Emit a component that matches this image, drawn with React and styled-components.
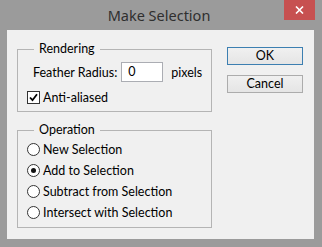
import React from 'react'
import styled, { createGlobalStyle } from 'styled-components'

const frame = '#9b9b9b'
const face = '#f0f0f0'
const groupLine = '#b4b4b4'

const GlobalStyle = createGlobalStyle`
    html, body{
        margin: 0;
        padding: 0;
        background: ${frame};
    }
    body{
        font-family: Lato, "Noto Sans", sans-serif;
        font-size: 12.5px;
        color: #000;
        white-space: nowrap;
    }
`;

const Window = styled.div`
    width: 322px;
    height: 247px;
    background: ${frame};
    display: flex;
    flex-direction: column;
`;

const TitleBar = styled.div`
    height: 30px;
    display: grid;
    grid-template-columns: 1fr auto 1fr;
    align-items: start;
    padding-right: 7px;
`;

const Title = styled.div`
    grid-column: 2;
    font-family: "Noto Sans", sans-serif;
    font-size: 14.5px;
    line-height: 30px;
    color: #2f2f2f;
    padding-left: 3px;
`;

const CloseButton = styled.div`
    grid-column: 3;
    justify-self: end;
    width: 31px;
    height: 20px;
    background: #c75050;
    display: flex;
    align-items: center;
    justify-content: center;
`;

const Client = styled.div`
    height: 209px;
    margin: 0 8px 0 7px;
    background: ${face};
    display: flex;
    padding: 11px 0 0 10px;
    box-sizing: border-box;
`;

const LeftColumn = styled.div`
    width: 195px;
    flex-shrink: 0;
    display: flex;
    flex-direction: column;
    gap: 10px;
`;

const Group = styled.fieldset`
    margin: 0;
    border: 1px solid ${groupLine};
    padding: ${p => p.$pad};
    display: flex;
    flex-direction: column;
`;

const Legend = styled.legend`
    padding: 0 5px;
    margin-left: 7px;
    line-height: 16px;
`;

const FeatherRow = styled.div`
    display: flex;
    align-items: center;
    height: 20px;
    margin-left: 6px;
`;

const TextField = styled.div`
    width: 42px;
    height: 20px;
    flex-shrink: 0;
    box-sizing: border-box;
    background: #fff;
    border: 1px solid #abadb3;
    margin: 0 8px 0 4px;
    padding-left: 6px;
    line-height: 18px;
`;

const OptionRow = styled.div`
    display: flex;
    align-items: center;
    height: ${p => p.$h}px;
    margin-top: ${p => p.$mt || 0}px;
    gap: 3px;
`;

const CheckBox = styled.div`
    width: 13px;
    height: 13px;
    box-sizing: border-box;
    border: 1px solid #333;
    background: #fff;
    display: flex;
    align-items: center;
    justify-content: center;
`;

const Radio = styled.div`
    width: 13px;
    height: 13px;
    box-sizing: border-box;
    border-radius: 50%;
    border: 1px solid #333;
    background: #fff;
    display: flex;
    align-items: center;
    justify-content: center;
    &::after{
        content: '';
        width: 5px;
        height: 5px;
        border-radius: 50%;
        background: ${p => p.$on ? '#111' : 'transparent'};
    }
`;

const ButtonColumn = styled.div`
    display: flex;
    flex-direction: column;
    gap: 10px;
    padding-top: 6px;
    margin-left: 15px;
`;

const Button = styled.div`
    width: 76px;
    height: 18px;
    box-sizing: border-box;
    border: 1px solid ${p => p.$default ? '#3c7fb1' : '#acacac'};
    background: linear-gradient(#f0f0f0, #e5e5e5);
    display: flex;
    align-items: center;
    justify-content: center;
    line-height: 16px;
`;

const options = ['New Selection', 'Add to Selection', 'Subtract from Selection', 'Intersect with Selection']

const App = () => {
    return(
        <Window>
            <GlobalStyle />
            <TitleBar>
                <Title>Make Selection</Title>
                <CloseButton>
                    <svg width="9" height="8" viewBox="0 0 9 8">
                        <path d="M1 0.5 L8 7.5 M8 0.5 L1 7.5" stroke="#fff" strokeWidth="1.6" />
                    </svg>
                </CloseButton>
            </TitleBar>
            <Client>
                <LeftColumn>
                    <Group $pad="5px 9px 6px">
                        <Legend>Rendering</Legend>
                        <FeatherRow>
                            Feather Radius:
                            <TextField>0</TextField>
                            pixels
                        </FeatherRow>
                        <OptionRow $h={15} $mt={8}>
                            <CheckBox>
                                <svg width="9" height="9" viewBox="0 0 9 9">
                                    <path d="M1 4.5 L3.5 7.2 L8 1.2" fill="none" stroke="#000" strokeWidth="1.8" />
                                </svg>
                            </CheckBox>
                            Anti-aliased
                        </OptionRow>
                    </Group>
                    <Group $pad="1px 9px 4px">
                        <Legend>Operation</Legend>
                        {options.map((o, i) => (
                            <OptionRow key={o} $h={21}>
                                <Radio $on={i === 1} />
                                {o}
                            </OptionRow>
                        ))}
                    </Group>
                </LeftColumn>
                <ButtonColumn>
                    <Button $default>OK</Button>
                    <Button>Cancel</Button>
                </ButtonColumn>
            </Client>
        </Window>
    )
}
export default App
